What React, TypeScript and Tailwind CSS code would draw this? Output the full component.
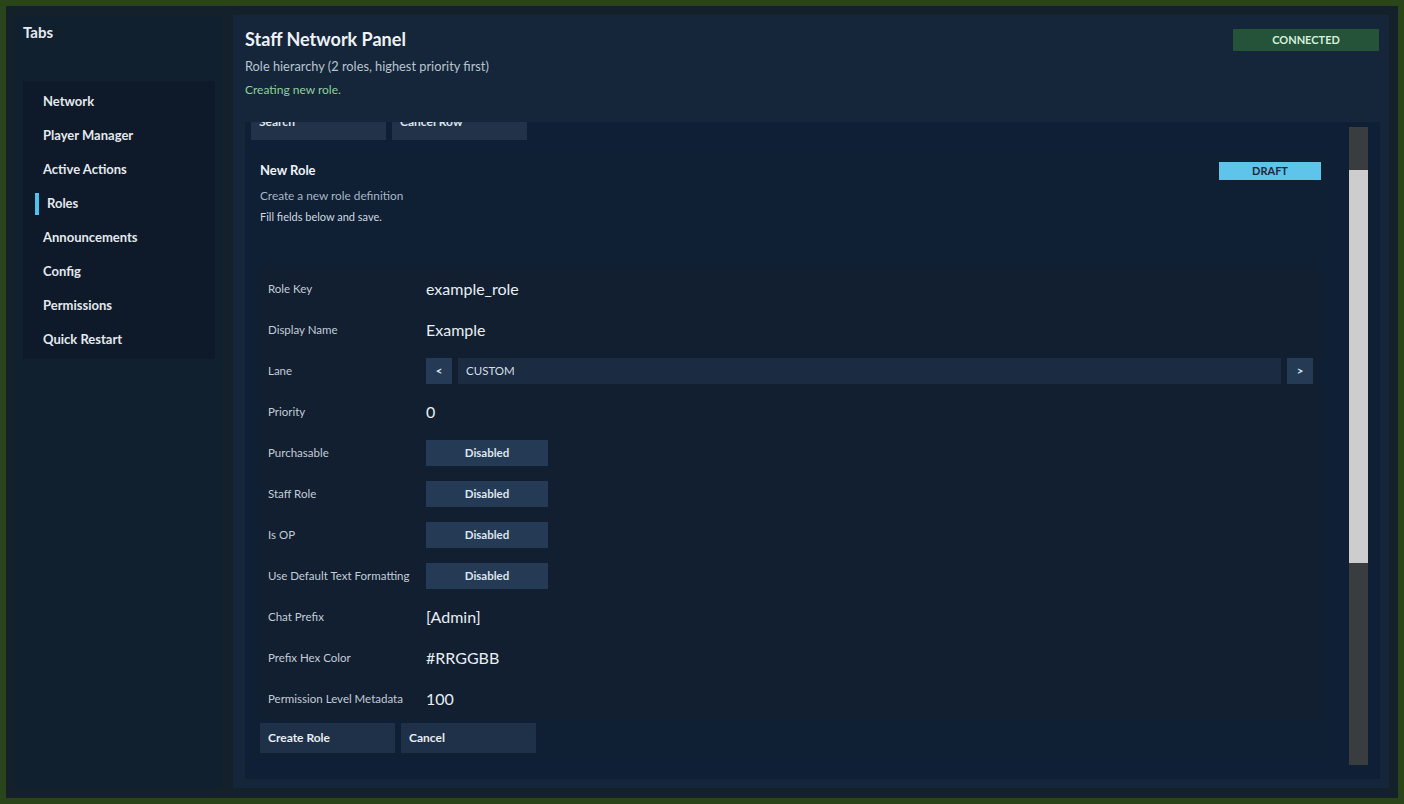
import { useState } from "react";

const tabs = [
    "Network",
    "Player Manager",
    "Active Actions",
    "Roles",
    "Announcements",
    "Config",
    "Permissions",
    "Quick Restart",
];

type Field = {
    label: string;
    kind: "text" | "toggle" | "lane";
    value: string;
};

const fields: Field[] = [
    { label: "Role Key", kind: "text", value: "example_role" },
    { label: "Display Name", kind: "text", value: "Example" },
    { label: "Lane", kind: "lane", value: "CUSTOM" },
    { label: "Priority", kind: "text", value: "0" },
    { label: "Purchasable", kind: "toggle", value: "Disabled" },
    { label: "Staff Role", kind: "toggle", value: "Disabled" },
    { label: "Is OP", kind: "toggle", value: "Disabled" },
    { label: "Use Default Text Formatting", kind: "toggle", value: "Disabled" },
    { label: "Chat Prefix", kind: "text", value: "[Admin]" },
    { label: "Prefix Hex Color", kind: "text", value: "#RRGGBB" },
    { label: "Permission Level Metadata", kind: "text", value: "100" },
];

function Sidebar() {
    const [active, setActive] = useState("Roles");

    return (
        <div className="w-[208px] h-full bg-[#11202f] px-[9px] pt-[9px] shrink-0">
            <div className="h-[17px] flex items-center text-[15px] font-bold text-[#e6ebf0]">Tabs</div>
            <div className="mt-[40px] w-[192px] bg-[#0e1a29] pt-[4px] pb-[2px]">
                {tabs.map(tab => {
                    const isActive = tab === active;
                    return (
                        <div key={tab} onClick={() => setActive(tab)}
                            className="h-[34px] flex items-center cursor-pointer text-[13px] font-bold text-[#e3e8ee]">
                            {isActive ? (
                                <>
                                    <span className="ml-[12px] w-[4px] h-[22px] bg-[#4cc3ef]" />
                                    <span className="ml-[8px]">{tab}</span>
                                </>
                            ) : (
                                <span className="ml-[20px]">{tab}</span>
                            )}
                        </div>
                    );
                })}
            </div>
        </div>
    );
}

function FieldRow({ field }: { field: Field }) {
    return (
        <div className="h-[41px] flex items-center">
            <div className="w-[166px] pl-[8px] text-[11.5px] text-[#c3ccd6] shrink-0">{field.label}</div>
            {field.kind === "text" && (
                <div className="text-[16px] text-[#e8eef4]">{field.value}</div>
            )}
            {field.kind === "toggle" && (
                <button className="w-[122px] h-[26px] bg-[#243a55] text-[11.5px] font-bold text-[#dde5ee]">
                    {field.value}
                </button>
            )}
            {field.kind === "lane" && (
                <div className="flex items-center gap-[6px] w-[887px]">
                    <button className="w-[26px] h-[26px] bg-[#243a55] text-[11.5px] font-bold text-[#dde5ee]">&lt;</button>
                    <div className="flex-1 h-[26px] bg-[#1b2b42] flex items-center pl-[8px] text-[11.5px] text-[#d6dee8]">
                        {field.value}
                    </div>
                    <button className="w-[26px] h-[26px] bg-[#243a55] text-[11.5px] font-bold text-[#dde5ee]">&gt;</button>
                </div>
            )}
        </div>
    );
}

function App() {
    return (
        <div className="w-[1404px] h-[804px] bg-[#2b451b] p-[6px]" style={{ fontFamily: "Lato, 'Noto Sans', sans-serif" }}>
            <div className="w-full h-full bg-[#14212a] pl-[8px] pt-[9px] pr-[9px] pb-[10px] flex gap-[11px]">
                <Sidebar />

                <div className="flex-1 h-full bg-[#15263a] pl-[12px] pr-[9px] pb-[9px] flex flex-col">
                    <div className="h-[107px] shrink-0 flex justify-between">
                        <div>
                            <div className="mt-[14px] h-[20px] flex items-center text-[18px] font-bold text-[#eef2f6]">Staff Network Panel</div>
                            <div className="mt-[10px] h-[16px] flex items-center text-[12.8px] text-[#b8c4d0]">
                                Role hierarchy (2 roles, highest priority first)
                            </div>
                            <div className="mt-[7px] h-[16px] flex items-center text-[12px] text-[#8fcf9a]">Creating new role.</div>
                        </div>
                        <div className="mt-[14px] mr-[1px] w-[146px] h-[22px] bg-[#245339] flex items-center justify-center text-[11px] font-bold text-[#d4f0dc]">
                            CONNECTED
                        </div>
                    </div>

                    <div className="flex-1 bg-[#0f1f36] flex overflow-hidden">
                        <div className="flex-1 overflow-hidden pl-[6px]">
                            <div className="flex gap-[6px] mt-[-18px]">
                                <button className="w-[135px] h-[36px] bg-[#213249] text-left pl-[8px] text-[12px] font-bold text-[#dde5ee]">Search</button>
                                <button className="w-[135px] h-[36px] bg-[#213249] text-left pl-[8px] text-[12px] font-bold text-[#dde5ee]">Cancel Row</button>
                            </div>

                            <div className="w-[1079px] bg-[#0f1f34] mt-[10px] pl-[9px] pr-[9px] pt-[12px] pb-[8px]">
                                <div className="flex justify-between items-center h-[18px]">
                                    <div className="text-[13px] font-bold text-[#eef2f6]">New Role</div>
                                    <div className="w-[102px] h-[18px] bg-[#5fc4ea] flex items-center justify-center text-[11px] font-bold text-[#1b2a3a]">
                                        DRAFT
                                    </div>
                                </div>
                                <div className="mt-[8px] text-[11.8px] text-[#a9b6c4] h-[16px] flex items-center">Create a new role definition</div>
                                <div className="mt-[5px] text-[11px] text-[#d0d8e0] h-[16px] flex items-center">Fill fields below and save.</div>

                                <div className="mt-[43px] w-[1060px] bg-[#111f31]">
                                    {fields.map(field => (
                                        <FieldRow key={field.label} field={field} />
                                    ))}
                                </div>

                                <div className="mt-[4px] flex gap-[6px]">
                                    <button className="w-[135px] h-[30px] bg-[#1f3149] text-left pl-[8px] text-[12px] font-bold text-[#e6ecf2]">Create Role</button>
                                    <button className="w-[135px] h-[30px] bg-[#1f3149] text-left pl-[8px] text-[12px] font-bold text-[#e6ecf2]">Cancel</button>
                                </div>
                            </div>
                        </div>

                        <div className="w-[19px] mt-[5px] mb-[14px] mr-[12px] bg-[#3a3d40] flex flex-col shrink-0">
                            <div className="h-[43px]" />
                            <div className="h-[393px] bg-[#cdcdcd]" />
                        </div>
                    </div>
                </div>
            </div>
        </div>
    );
}

export default App;
